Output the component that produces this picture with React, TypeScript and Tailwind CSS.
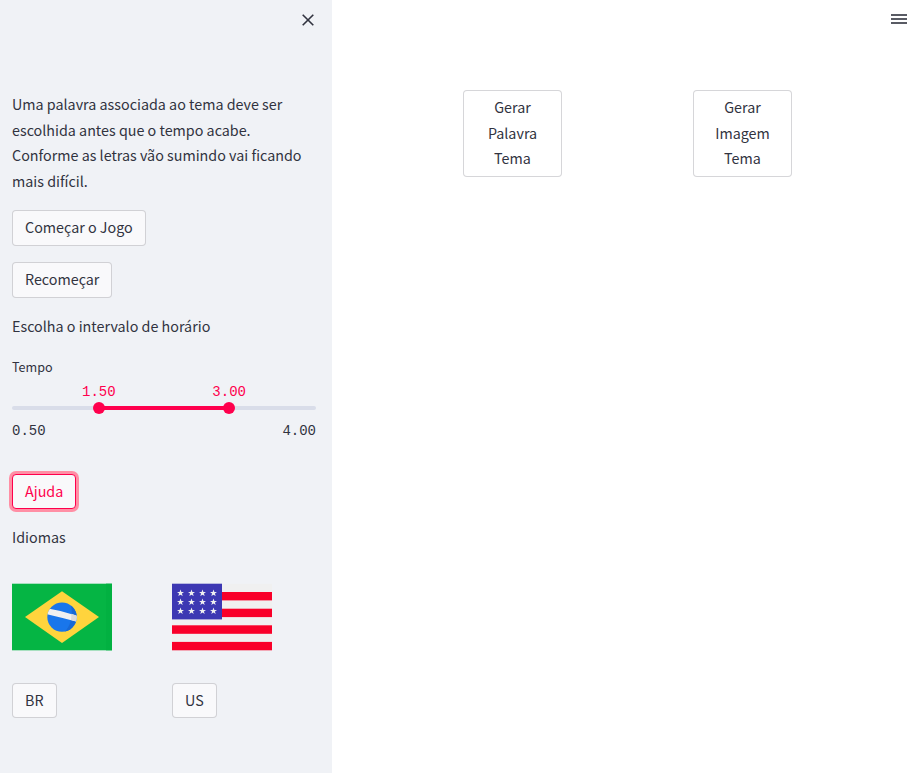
import type { ReactNode } from "react";

function Button({ children, className = "" }: { children: ReactNode; className?: string }) {
  return (
    <button
      className={`block rounded-[4px] border px-3 pt-[3px] pb-[5px] text-center leading-[25.6px] ${className}`}
    >
      {children}
    </button>
  );
}

const plain = "border-[#31333f]/20 bg-[#f9f9fb]";

function BrazilFlag() {
  return (
    <svg className="block h-[68px] w-[100px]" viewBox="0 -0.6 100 68">
      <defs>
        <clipPath id="globe">
          <circle cx="50" cy="33.5" r="14.7" />
        </clipPath>
      </defs>
      <rect y="0.1" width="100" height="66.6" fill="#05b544" />
      <rect x="94" y="0.1" width="6" height="66.6" fill="#02b141" />
      <path d="M13 33.5 50 7.7l37 25.8L50 59.3Z" fill="#ffd43d" />
      <g clipPath="url(#globe)">
        <rect x="35" y="18" width="30" height="31" fill="#1976eb" />
        <path d="M58 18c3 9 3 22-6 31h14V18Z" fill="#1768d5" />
        <path d="M34 24.5Q50 27 66 32.5v5.8Q50 34 34 30.3Z" fill="#f0f0f0" />
        <path d="M59.5 30.2 66 32.5v5.8l-7-1.8Z" fill="#dadada" />
      </g>
    </svg>
  );
}

const starRows = [9.5, 18.4, 27.3];
const starColumns = [8.5, 19.5, 30.5, 41.5];

function UsFlag() {
  return (
    <svg className="block h-[68px] w-[100px]" viewBox="0 -0.6 100 68">
      <rect y="0.1" width="100" height="66.6" fill="#f0f0f0" />
      <g fill="#f90029">
        <rect y="8.4" width="100" height="8.4" />
        <rect y="25.1" width="100" height="8.4" />
        <rect y="41.7" width="100" height="8.5" />
        <rect y="58.3" width="100" height="8.4" />
      </g>
      <rect y="0.1" width="50" height="35.7" fill="#3d38b3" />
      <g fill="#f0f0f0">
        {starRows.map((y) =>
          starColumns.map((x) => (
            <path
              key={`${x}-${y}`}
              transform={`translate(${x} ${y})`}
              d="M0-3.5.9-1H3.5L1.4.5 2.2 3 0 1.6-2.2 3-1.4.5-3.5-1H-.9Z"
            />
          )),
        )}
      </g>
    </svg>
  );
}

function Slider() {
  return (
    <div className="font-['Liberation_Mono',monospace] text-[14px] leading-[20px]">
      <div className="relative mt-[28px] h-1 rounded-[4px] bg-[#d9dde9]">
        <div className="absolute top-0 left-[28.57%] h-1 w-[42.86%] bg-[#ff004d]" />
        {[
          { at: "left-[28.57%]", text: "1.50" },
          { at: "left-[71.43%]", text: "3.00" },
        ].map(({ at, text }) => (
          <div
            key={text}
            className={`absolute top-[-4px] h-3 w-3 -translate-x-1/2 rounded-full bg-[#ff004d] ${at}`}
          >
            <span className="absolute bottom-[12px] left-1/2 -translate-x-1/2 text-[#ff004d]">{text}</span>
          </div>
        ))}
      </div>
      <div className="mt-[11px] flex justify-between">
        <span>0.50</span>
        <span>4.00</span>
      </div>
    </div>
  );
}

export default function App() {
  return (
    <div className="flex h-[773px] w-[923px] overflow-hidden bg-white font-['Noto_Sans_CJK_SC',sans-serif] text-[14.32px] leading-[25.6px] text-[#31333f]">
      <aside className="w-[332px] shrink-0 bg-[#f0f2f6] pr-4 pl-3">
        <div className="flex h-[91px] justify-end pt-3">
          <svg className="h-4 w-4" viewBox="0 0 16 16" fill="none" stroke="#31333f" strokeWidth="1.6">
            <path d="m2.7 2.7 10.6 10.6M13.3 2.7 2.7 13.3" />
          </svg>
        </div>
        <p>
          Uma palavra associada ao tema deve ser
          <br />
          escolhida antes que o tempo acabe.
          <br />
          Conforme as letras vão sumindo vai ficando
          <br />
          mais difícil.
        </p>
        <div className="mt-[17px] flex flex-col items-start gap-4">
          <Button className={plain}>Começar o Jogo</Button>
          <Button className={plain}>Recomeçar</Button>
        </div>
        <p className="mt-[15px]">Escolha o intervalo de horário</p>
        <p className="mt-[18px] text-[12.6px] leading-[22px]">Tempo</p>
        <Slider />
        <Button className="mt-[32.6px] border-[#ff004d] bg-[#f9f9fb] text-[#ff004d] shadow-[0_0_0_3px_#ff8fa5]">
          Ajuda
        </Button>
        <p className="mt-[15px]">Idiomas</p>
        <div className="mt-[33px] grid grid-cols-2 gap-x-4">
          <BrazilFlag />
          <UsFlag />
        </div>
        <div className="mt-[31.6px] grid grid-cols-2 justify-items-start gap-x-4">
          <Button className={plain}>BR</Button>
          <Button className={plain}>US</Button>
        </div>
      </aside>
      <main className="flex-1">
        <div className="flex h-[90px] justify-end pt-[14px] pr-4">
          <svg className="h-[10px] w-4" viewBox="0 0 16 10" fill="#31333f">
            <rect y="0.2" width="16" height="1.6" />
            <rect y="4.2" width="16" height="1.6" />
            <rect y="8.2" width="16" height="1.6" />
          </svg>
        </div>
        <div className="flex gap-[131px] pl-[131px]">
          <Button className="w-[99px] border-[#31333f]/20 bg-white">
            Gerar
            <br />
            Palavra
            <br />
            Tema
          </Button>
          <Button className="w-[99px] border-[#31333f]/20 bg-white">
            Gerar
            <br />
            Imagem
            <br />
            Tema
          </Button>
        </div>
      </main>
    </div>
  );
}
